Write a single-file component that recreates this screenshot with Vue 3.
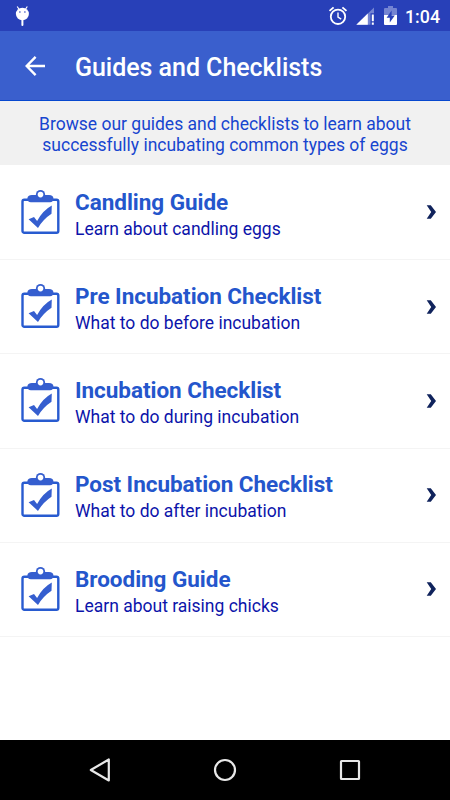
<script setup>
const guides = [
  { title: 'Candling Guide', text: 'Learn about candling eggs' },
  { title: 'Pre Incubation Checklist', text: 'What to do before incubation' },
  { title: 'Incubation Checklist', text: 'What to do during incubation' },
  { title: 'Post Incubation Checklist', text: 'What to do after incubation' },
  { title: 'Brooding Guide', text: 'Learn about raising chicks' },
]
</script>

<template>
  <div class="screen">
    <header class="status">
      <svg class="droid" width="16" height="22" viewBox="0 0 16 22">
        <path d="M3.200 1.500l2 3M13.300 1.500l-2 3" stroke="#fff" stroke-width="1.200" />
        <ellipse cx="8.400" cy="9" rx="6.500" ry="6.200" fill="#fff" />
        <circle cx="5.900" cy="7" r=".8" fill="#2840b8" />
        <circle cx="10.900" cy="7" r=".8" fill="#2840b8" />
        <path d="M8.400 15v5" stroke="#fff" stroke-width="2" stroke-linecap="round" />
      </svg>
      <div class="indicators">
        <svg width="20" height="20" viewBox="0 0 20 20" fill="none" stroke="#fff">
          <circle cx="10" cy="10.800" r="7.200" stroke-width="1.800" />
          <path d="M1.500 4.900l4.100-3.500M18.500 4.900l-4.100-3.500" stroke-width="1.900" />
          <path d="M10 6.500v4.700l3.200 2" stroke-width="1.400" />
        </svg>
        <svg class="signal" width="19" height="18" viewBox="0 0 19 18">
          <path d="M18 .5v5.700h-3.500V17.800H.3z" fill="#7484d2" />
          <path d="M11.800 6.500v11.300H.3z" fill="#fff" />
          <path d="M15.800 7.500h2v6.800h-2zM15.800 15.600h2v2.200h-2z" fill="#fff" />
        </svg>
        <svg class="battery" width="13" height="19" viewBox="0 0 13 19">
          <path d="M4 0h5v2h3q1 0 1 1v6H0V3q0-1 1-1h3z" fill="#7484d2" />
          <path d="M0 9h13v9q0 1-1 1H1q-1 0-1-1z" fill="#fff" />
          <path d="M7.600 4.500L2.600 11.700h3.200V16.600l5-7.200H7.600z" fill="#2840b8" />
        </svg>
        <span class="time">1:04</span>
      </div>
    </header>

    <div class="toolbar">
      <svg width="22" height="22" viewBox="0 0 22 22" fill="none" stroke="#fff" stroke-width="2.400">
        <path d="M21 11H3M11.600 1.800L2.700 11l8.900 9.200" />
      </svg>
      <h1>Guides and Checklists</h1>
    </div>

    <p class="intro">Browse our guides and checklists to learn about<br />successfully incubating common types of eggs</p>

    <main>
      <section v-for="guide in guides" :key="guide.title" class="row">
        <svg class="clipboard" width="41" height="46" viewBox="0 0 41 46">
          <rect x="2.500" y="9.800" width="35.800" height="33" rx="1.800" fill="#fff" stroke="#285bd0" stroke-width="2.400" />
          <path d="M7.400 8.500Q7.400 4.900 12 4.900h17q4.400 0 4.400 3.600 0 3.800-3.400 3.800H10.800Q7.400 12.300 7.400 8.500z" fill="#355ecf" />
          <circle cx="20.500" cy="4.600" r="4.600" fill="#355ecf" />
          <circle cx="20.500" cy="4.600" r="2.800" fill="#fff" />
          <path d="M8.600 29.300l5.400-2.300 3.100 4Q22.500 20.500 31.800 15.400l-.3 8.400Q23.500 29 18 37.900z" fill="#355ecf" />
        </svg>
        <div class="copy">
          <h2>{{ guide.title }}</h2>
          <p>{{ guide.text }}</p>
        </div>
        <svg class="chevron" width="11" height="16" viewBox="0 0 11 16">
          <path d="M.7 1.200h4.100L10 8l-5.200 6.800H.7L5.200 8z" fill="#10235c" />
        </svg>
      </section>
    </main>

    <nav>
      <svg width="24" height="28" viewBox="0 0 24 28"><path d="M20.800 3.500v21L2.800 14z" /></svg>
      <svg width="24" height="28" viewBox="0 0 24 28"><circle cx="12" cy="14" r="10" /></svg>
      <svg width="24" height="28" viewBox="0 0 24 28"><rect x="3" y="5" width="18" height="18" rx=".5" /></svg>
    </nav>
  </div>
</template>

<style>
body { margin: 0; }
</style>

<style scoped>
.screen {
  width: 450px;
  height: 800px;
  display: flex;
  flex-direction: column;
  background: #fff;
  font-family: Roboto, sans-serif;
  overflow: hidden;
}
svg { display: block; flex: none; }
h1, h2, p { margin: 0; white-space: nowrap; }
.status {
  height: 31px;
  flex: none;
  box-sizing: border-box;
  padding: 0 10px 0 14px;
  display: flex;
  justify-content: space-between;
  background: #2840b8;
}
.droid { margin-top: 5px; }
.indicators { display: flex; padding-top: 6px; }
.signal { margin: 1px 0 0 8px; }
.battery { margin-left: 9px; }
.time {
  margin-left: 8px;
  font-size: 17.800px;
  font-weight: 500;
  line-height: 21px;
  color: #fff;
}
.toolbar {
  height: 70px;
  flex: none;
  box-sizing: border-box;
  padding-left: 24px;
  display: flex;
  align-items: center;
  background: #3a5fcd;
  border-bottom: 1px solid #0748cf;
}
h1 {
  margin: 5px 0 0 29px;
  font-size: 25px;
  font-weight: 500;
  line-height: 30px;
  letter-spacing: -.04px;
  color: #fff;
}
.intro {
  height: 64px;
  flex: none;
  box-sizing: border-box;
  padding-top: 13px;
  text-align: center;
  font-size: 17.500px;
  line-height: 20.500px;
  letter-spacing: -.01px;
  color: #1745cf;
  background: #f1f1f1;
}
main { flex: 1; padding-top: .8px; }
.row {
  height: 94.250px;
  box-sizing: border-box;
  padding: 0 13px 0 20px;
  display: flex;
  align-items: flex-start;
  border-bottom: 1px solid #f4f4f4;
}
.clipboard { margin-top: 24.200px; }
.copy { flex: 1; margin: 22.800px 0 0 14px; }
h2 {
  font-size: 22.500px;
  font-weight: 700;
  line-height: 27px;
  letter-spacing: -.04px;
  color: #2456cc;
}
.copy p {
  font-size: 17.500px;
  line-height: 27px;
  color: #0c14aa;
}
.chevron { margin-top: 38.600px; }
nav {
  height: 60px;
  flex: none;
  box-sizing: border-box;
  padding: 0 88px;
  display: flex;
  align-items: center;
  justify-content: space-between;
  background: #000;
}
nav svg {
  fill: none;
  stroke: #e8e8e8;
  stroke-width: 2.200;
  stroke-linejoin: round;
}
</style>
